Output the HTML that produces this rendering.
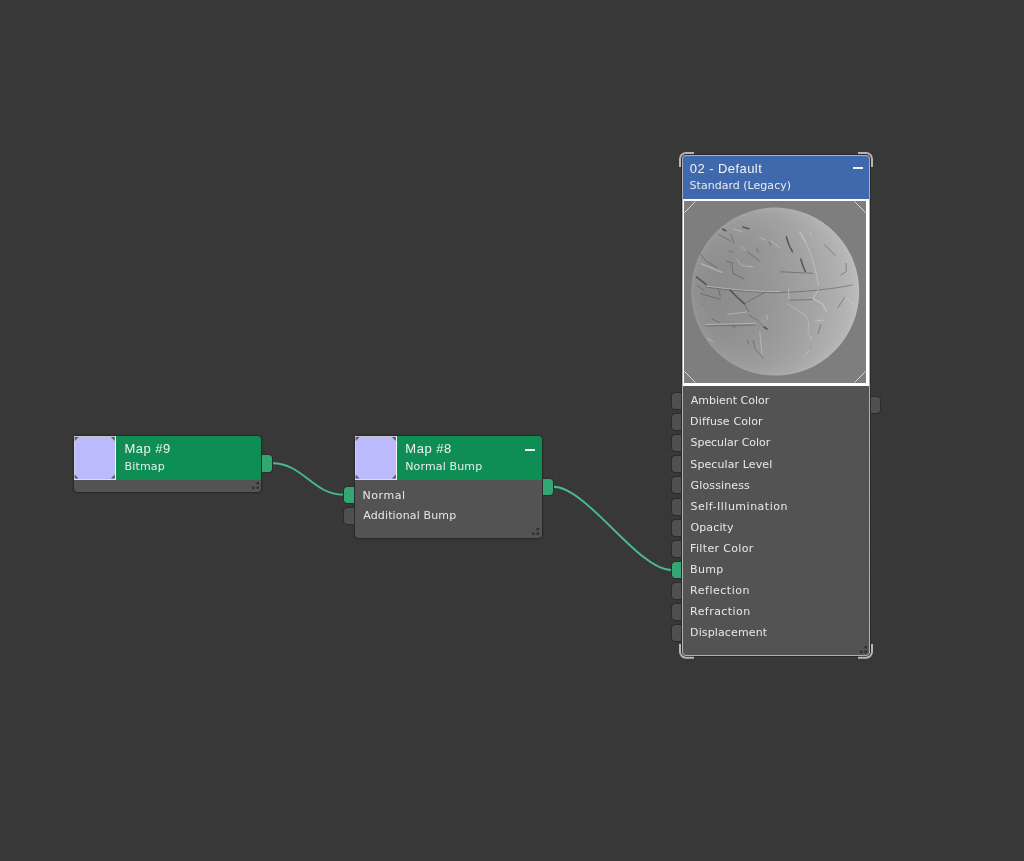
<!DOCTYPE html>
<html><head><meta charset="utf-8"><title>Slate Material Editor</title>
<style>
html,body{margin:0;padding:0;}
body{width:1024px;height:861px;overflow:hidden;background:#383838;position:relative;font-family:"Liberation Sans",sans-serif;color:#e4e4e4;}
#grid{position:absolute;left:0;top:0;width:1024px;height:861px;
 background-image:linear-gradient(to right,#393939 2px,transparent 2px),linear-gradient(to bottom,#393939 2px,transparent 2px);
 background-size:23.45px 23.45px;background-position:-7px 8.5px;}
.node{position:absolute;background:#535353;border-radius:4px;box-shadow:0 0 0 1px #2a2a2a, 0 0 2px 1px rgba(0,0,0,.25);}
.hdr{position:absolute;left:0;top:0;right:0;height:43.5px;background:#0e8e55;border-radius:4px 4px 0 0;}
.thumb{position:absolute;left:0;top:0;width:42.2px;height:43.7px;box-sizing:border-box;background:#bbbafc;border-top:1px solid #c6c6cc;border-right:1.5px solid #f4f4fa;border-bottom:1.3px solid #dedee6;border-left:.7px solid #cfcfe6;}
.sock{position:absolute;width:10px;height:16.5px;background:#505050;box-shadow:0 0 0 1px #2b2b2b;}
.sock.l{border-radius:3.5px 0 0 3.5px;}
.sock.r{border-radius:0 3.5px 3.5px 0;}
.sock.g{background:#33a673;}
.min{position:absolute;width:10px;height:2px;background:#f2f2f2;}
#n3hdr{position:absolute;left:0;top:0;right:0;height:44px;background:#4068ac;border-radius:4px 4px 0 0;}
#n3frame{position:absolute;left:0;top:43.7px;width:188px;height:187.5px;background:#fff;}
#n3prev{position:absolute;left:2.2px;top:2.3px;width:182.1px;height:182px;background:#7e7e7e;overflow:hidden;}
#n3edge{position:absolute;left:0;top:0;right:0;bottom:0;border:1px solid #b0b0b0;border-radius:4px;}
svg{position:absolute;left:0;top:0;}
.tx{position:absolute;line-height:16px;white-space:nowrap;filter:blur(.3px);}
.t1{color:#f2f2f2;}
.t2{color:#ececec;font-family:"DejaVu Sans","Liberation Sans",sans-serif;}
.row{color:#e8e8e8;font-family:"DejaVu Sans","Liberation Sans",sans-serif;}
</style></head><body>
<div id="grid"></div>
<!-- wires -->
<svg width="1024" height="861" viewBox="0 0 1024 861">
 <path d="M272.5,463.3 C303,463.3 313,494.6 343,494.6" fill="none" stroke="#4aba8a" stroke-width="1.9"/>
 <path d="M553.3,486.8 C587,486.8 638,570 671,570" fill="none" stroke="#4aba8a" stroke-width="1.9"/>
</svg>
<!-- Node 1 -->
<div class="node" id="n1" style="left:74px;top:436px;width:187px;height:55.5px;">
 <div class="hdr"></div><div class="thumb"><svg width="43" height="44" viewBox="0 0 43 44" style="left:-.7px;top:-1px"><g fill="#5c5c62"><path d="M0.6,1 H4.6 L0.6,5 Z"/><path d="M40.8,1 V5 L36.8,1 Z"/><path d="M0.6,42.4 V38.4 L4.6,42.4 Z"/><path d="M40.8,42.4 H36.8 L40.8,38.4 Z"/></g></svg></div>
 <svg class="dots" width="8" height="8" viewBox="0 0 8 8" style="left:177.7px;top:46px"><g fill="#2e2e2e"><rect x="4.5" y="0" width="2.5" height="2.3"/><rect x="0" y="4.6" width="2.5" height="2.3"/><rect x="4.5" y="4.6" width="2.5" height="2.3"/></g></svg>
 <div class="tx t1" id="a1" style="left:50.54px;top:4.90px;font-size:13px;letter-spacing:0.464px">Map #9</div>
 <div class="tx t2" id="a2" style="left:50.51px;top:22.94px;font-size:11px;letter-spacing:0.172px">Bitmap</div>
</div>
<div class="sock r g" style="left:262.3px;top:455px;"></div>
<!-- Node 2 -->
<div class="node" id="n2" style="left:354.7px;top:436px;width:187px;height:101.5px;">
 <div class="hdr"></div><div class="thumb"><svg width="43" height="44" viewBox="0 0 43 44" style="left:-.7px;top:-1px"><g fill="#5c5c62"><path d="M0.6,1 H4.6 L0.6,5 Z"/><path d="M40.8,1 V5 L36.8,1 Z"/><path d="M0.6,42.4 V38.4 L4.6,42.4 Z"/><path d="M40.8,42.4 H36.8 L40.8,38.4 Z"/></g></svg></div>
 <svg class="dots" width="8" height="8" viewBox="0 0 8 8" style="left:177.6px;top:92.4px"><g fill="#2e2e2e"><rect x="4.5" y="0" width="2.5" height="2.3"/><rect x="0" y="4.6" width="2.5" height="2.3"/><rect x="4.5" y="4.6" width="2.5" height="2.3"/></g></svg>
 <div class="min" style="left:170.3px;top:12.8px;"></div>
  <div class="tx t1" id="b1" style="left:50.68px;top:4.90px;font-size:13px;letter-spacing:0.501px">Map #8</div>
 <div class="tx t2" id="b2" style="left:50.46px;top:22.94px;font-size:11px;letter-spacing:0.149px">Normal Bump</div>
 <div class="tx row" id="b3" style="left:7.70px;top:52.19px;font-size:11px;letter-spacing:0.598px">Normal</div>
 <div class="tx row" id="b4" style="left:8.50px;top:71.89px;font-size:11px;letter-spacing:0.147px">Additional Bump</div>
</div>
<div class="sock l g" style="left:343.9px;top:486.5px;height:16.5px"></div>
<div class="sock l" style="left:343.9px;top:507.7px;height:16.7px"></div>
<div class="sock r g" style="left:542.5px;top:478.6px;"></div>
<!-- Node 3 -->
<div class="sock l" style="left:671.7px;top:393.1px;width:9.3px;height:16px"></div>
<div class="sock l" style="left:671.7px;top:414.2px;width:9.3px;height:16px"></div>
<div class="sock l" style="left:671.7px;top:435.3px;width:9.3px;height:16px"></div>
<div class="sock l" style="left:671.7px;top:456.3px;width:9.3px;height:16px"></div>
<div class="sock l" style="left:671.7px;top:477.4px;width:9.3px;height:16px"></div>
<div class="sock l" style="left:671.7px;top:498.5px;width:9.3px;height:16px"></div>
<div class="sock l" style="left:671.7px;top:519.6px;width:9.3px;height:16px"></div>
<div class="sock l" style="left:671.7px;top:540.7px;width:9.3px;height:16px"></div>
<div class="sock l g" style="left:671.7px;top:561.7px;width:9.3px;height:16px"></div>
<div class="sock l" style="left:671.7px;top:582.8px;width:9.3px;height:16px"></div>
<div class="sock l" style="left:671.7px;top:603.9px;width:9.3px;height:16px"></div>
<div class="sock l" style="left:671.7px;top:625.0px;width:9.3px;height:16px"></div>
<div class="sock r" style="left:870.7px;top:396.7px;width:9.2px;height:16.3px"></div>
<div class="node" id="n3" style="left:682px;top:155px;width:188px;height:501px;border-radius:4px;box-shadow:0 0 0 1px #2a2a2a;">
 <div id="n3hdr"></div>
 <div id="n3frame"><div id="n3prev">
 <svg width="182" height="182" viewBox="0 0 182 182">
  <defs>
   <linearGradient id="sg" x1="0" y1="0.52" x2="1" y2="0.48"><stop offset="0" stop-color="#7f7f7f"/><stop offset="1" stop-color="#b0b0b0"/></linearGradient>
   <filter id="bl" x="-5%" y="-5%" width="110%" height="110%"><feGaussianBlur stdDeviation="0.35"/></filter>
   <clipPath id="sc"><circle cx="91.2" cy="90.6" r="84"/></clipPath>
   <radialGradient id="rim" cx="0.5" cy="0.5" r="0.5"><stop offset="0" stop-color="#fff" stop-opacity="0"/><stop offset="0.5" stop-color="#fff" stop-opacity="0.024"/><stop offset="0.7" stop-color="#fff" stop-opacity="0.052"/><stop offset="0.85" stop-color="#fff" stop-opacity="0.088"/><stop offset="0.95" stop-color="#fff" stop-opacity="0.128"/><stop offset="1" stop-color="#fff" stop-opacity="0.185"/></radialGradient>
  </defs>
  <circle cx="91.2" cy="90.6" r="84" fill="url(#sg)"/>
  <circle cx="91.2" cy="90.6" r="84" fill="url(#rim)"/>
  <g clip-path="url(#sc)" filter="url(#bl)" fill="none" stroke-linecap="round" stroke-linejoin="round">
   <polygon points="72.5,119.4 83,116.1 81.4,127.2" fill="#999" stroke="none"/>
   <g stroke="#4a4a4a" stroke-width="1.6" opacity=".85">
    <path d="M38.5,28 L41.8,29.8"/><path d="M59,26 L64.7,27.8"/>
    <path d="M102.3,35.7 L105,44 L108.4,50.7"/>
    <path d="M116.8,58 L119,65 L121.2,70.2"/>
    <path d="M12.3,75.8 L22.3,83.6"/>
    <path d="M46,89 L53,96 L60.2,102.7"/>
    <path d="M80,126 L83,128"/>
   </g>
   <g stroke="#555" stroke-width="1" opacity=".55">
    <path d="M34.6,33.4 L46.8,40.1"/><path d="M46.8,33.4 L50.2,42.4"/>
    <path d="M62.4,50.2 L75.8,60.2"/><path d="M72.5,46.8 L74.7,51.3"/>
    <path d="M85.3,41.2 L86.4,44"/><path d="M44.6,50.2 L49,51.3"/><path d="M42.4,60.2 L47.9,61.9"/>
    <path d="M16.7,53.5 L22.3,60.2 L33.4,66.9"/>
    <path d="M47.9,62.4 L49,72.5 L60.2,78"/>
    <path d="M13.4,84.7 L20,89.2"/>
    <path d="M34.6,88 L36.2,95"/>
    <path d="M22,86 C50,90 80,92 96,91.5 C120,91 150,88 168,84"/>
    <path d="M96.7,70.8 L129,72.3"/>
    <path d="M140.2,43.5 L151.3,54.6"/>
    <path d="M161.9,62.4 L162.5,70.2 L156.9,74.1"/>
    <path d="M60.2,102.7 L82.5,90.5"/><path d="M60.2,102.7 L64.7,110.5"/>
    <path d="M16.7,92.7 L36.8,98.3"/><path d="M18,103 L18.6,103.6"/>
    <path d="M27.9,117.8 L35.7,121.7"/><path d="M47.9,125 L51.3,126.7"/>
    <path d="M64.7,113.9 L73.6,119.4 L81.4,127.2"/>
    <path d="M69.1,139.5 L71.3,148.4 L79.2,157.3"/><path d="M63.5,139.5 L64.7,142.9"/>
    <path d="M105.5,99.2 L129,98.6"/>
    <path d="M136.8,123.9 L134,132.8"/>
    <path d="M160.8,96 L154,106.6"/><path d="M126.8,146.8 L127.3,147.3"/>
    <path d="M22,125 L71,124"/>
   </g>
   <g stroke="#e0e0e0" stroke-width="1" opacity=".42">
    <path d="M49,27.9 L58,30.7"/>
    <path d="M56.9,44.6 L62.4,50.2"/><path d="M75.8,36.8 L81.4,39"/>
    <path d="M87,40.1 L96,46.8"/>
    <path d="M17.8,63 L37.9,71.3" stroke-width="1.4"/>
    <path d="M52.4,58 L58,64.7 L69.1,65.8"/>
    <path d="M115.7,31.2 L121.2,40.1" stroke-width="1.6"/>
    <path d="M121.2,40.1 C126,50 131,64 134.6,84.7"/>
    <path d="M125.7,31.2 L128,34.6"/>
    <path d="M22,85 C50,89 80,91 96,90.5"/>
    <path d="M104.5,88 L105,98.3 M129,97.7 L134.6,88.2"/>
    <path d="M129,97.7 L138,102.7 L142.4,110" stroke-width="1.4"/>
    <path d="M103.4,102.7 L121.2,113.9 L124.6,120.6 L124,131.7 L128,138.4" stroke-width=".8"/>
    <path d="M131,120 L140,119"/>
    <path d="M160.8,96 L170,104"/>
    <path d="M43.5,113.3 L62.4,111"/><path d="M22.3,123.5 L71.3,122.4"/>
    <path d="M75.8,130.6 L78,152.9"/><path d="M23.4,137.3 L29,140.6"/>
    <path d="M82.5,114 L83.5,118"/>
    <path d="M124.5,150.5 L121,154"/>
   </g>
  </g>
  <g fill="none" stroke="#dcdcdc" stroke-width="0.9">
   <path d="M0.5,11.5 L11.5,0.5"/><path d="M170.5,0.5 L181.5,11.5"/><path d="M0.5,170.5 L11.5,181.5"/><path d="M170.5,181.5 L181.5,170.5"/>
  </g>
 </svg>
 </div></div>
 <div id="n3edge"></div><svg class="dots" width="8" height="8" viewBox="0 0 8 8" style="left:178px;top:491px"><g fill="#2e2e2e"><rect x="4.5" y="0" width="2.5" height="2.3"/><rect x="0" y="4.6" width="2.5" height="2.3"/><rect x="4.5" y="4.6" width="2.5" height="2.3"/></g></svg>
 <div class="min" style="left:170.7px;top:12px;"></div>
 <div class="tx t1" id="c1" style="left:7.82px;top:6.20px;font-size:13px;letter-spacing:0.431px">02 - Default</div>
 <div class="tx t2" id="c2" style="left:7.60px;top:22.59px;font-size:11px;letter-spacing:0.020px">Standard (Legacy)</div>
 <div class="tx row" id="r0" style="left:8.83px;top:238.49px;font-size:11px;letter-spacing:-0.009px">Ambient Color</div>
 <div class="tx row" id="r1" style="left:8.11px;top:258.59px;font-size:11px;letter-spacing:0.129px">Diffuse Color</div>
 <div class="tx row" id="r2" style="left:8.53px;top:279.69px;font-size:11px;letter-spacing:-0.046px">Specular Color</div>
 <div class="tx row" id="r3" style="left:8.35px;top:301.79px;font-size:11px;letter-spacing:0.097px">Specular Level</div>
 <div class="tx row" id="r4" style="left:8.54px;top:322.89px;font-size:11px;letter-spacing:0.140px">Glossiness</div>
 <div class="tx row" id="r5" style="left:8.44px;top:343.99px;font-size:11px;letter-spacing:0.505px">Self-Illumination</div>
 <div class="tx row" id="r6" style="left:8.44px;top:365.09px;font-size:11px;letter-spacing:0.128px">Opacity</div>
 <div class="tx row" id="r7" style="left:8.08px;top:386.19px;font-size:11px;letter-spacing:0.344px">Filter Color</div>
 <div class="tx row" id="r8" style="left:8.08px;top:407.29px;font-size:11px;letter-spacing:0.305px">Bump</div>
 <div class="tx row" id="r9" style="left:8.08px;top:428.39px;font-size:11px;letter-spacing:0.514px">Reflection</div>
 <div class="tx row" id="r10" style="left:8.08px;top:449.49px;font-size:11px;letter-spacing:0.438px">Refraction</div>
 <div class="tx row" id="r11" style="left:8.04px;top:469.59px;font-size:11px;letter-spacing:0.129px">Displacement</div>
</div>
<svg width="1024" height="861" viewBox="0 0 1024 861">
 <g fill="none" stroke="#b6b6b6" stroke-width="2">
  <path d="M680,167 V159 A6,6 0 0 1 686,153 H694"/>
  <path d="M858,153 H866 A6,6 0 0 1 872,159 V167"/>
  <path d="M680,644 V651.7 A6,6 0 0 0 686,657.7 H694"/>
  <path d="M858,657.7 H866 A6,6 0 0 0 872,651.7 V644"/>
 </g>
</svg>
</body></html>
